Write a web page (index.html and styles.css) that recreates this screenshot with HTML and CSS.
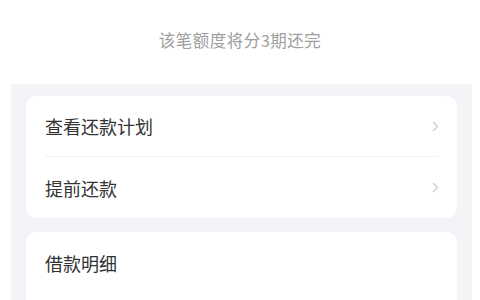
FILE: index.html
```html
<!DOCTYPE html>
<html lang="zh-CN">
<head>
    <meta charset="UTF-8">
    <meta name="viewport" content="width=device-width, initial-scale=1.0">
    <title>还款计划</title>
    <link rel="stylesheet" href="styles.css">
</head>
<body>
    <div class="summary">该笔额度将分3期还完</div>

    <div class="panel">
        <div class="card">
            <div class="row">
                <span class="row-title">查看还款计划</span>
                <svg class="arrow" width="7" height="11" viewBox="0 0 7 11"><path d="M1 1l4.5 4.5L1 10" fill="none" stroke="#c8c8cc" stroke-width="1.2"/></svg>
            </div>
            <div class="row">
                <span class="row-title">提前还款</span>
                <svg class="arrow" width="7" height="11" viewBox="0 0 7 11"><path d="M1 1l4.5 4.5L1 10" fill="none" stroke="#c8c8cc" stroke-width="1.2"/></svg>
            </div>
        </div>

        <div class="card detail">
            <div class="row">
                <span class="row-title">借款明细</span>
            </div>
        </div>
    </div>
</body>
</html>
```

FILE: styles.css
```css
body {
    margin: 0;
    background-color: #fff;
    font-family: "Noto Sans CJK SC", "Noto Sans", sans-serif;
    color: #333;
    overflow: hidden;
}
.summary {
    height: 84px;
    padding-top: 28px;
    box-sizing: border-box;
    text-align: center;
    font-size: 16.5px;
    color: #9e9e9e;
    letter-spacing: 0.5px;
}
.panel {
    margin: 0 8px 0 11px;
    padding: 12px 15px;
    background-color: #f3f4f7;
}
.card {
    background-color: #fff;
    border-radius: 10px;
    padding: 0 19px;
    margin-bottom: 14px;
}
.detail {
    padding-bottom: 60px;
}
.row {
    height: 61px;
    display: flex;
    align-items: center;
    justify-content: space-between;
    border-bottom: 1px solid #f2f2f4;
    box-sizing: border-box;
}
.row:last-child {
    border-bottom: none;
}
.row-title {
    font-size: 18px;
    color: #333;
}
.arrow {
    margin-right: -1px;
}
```
